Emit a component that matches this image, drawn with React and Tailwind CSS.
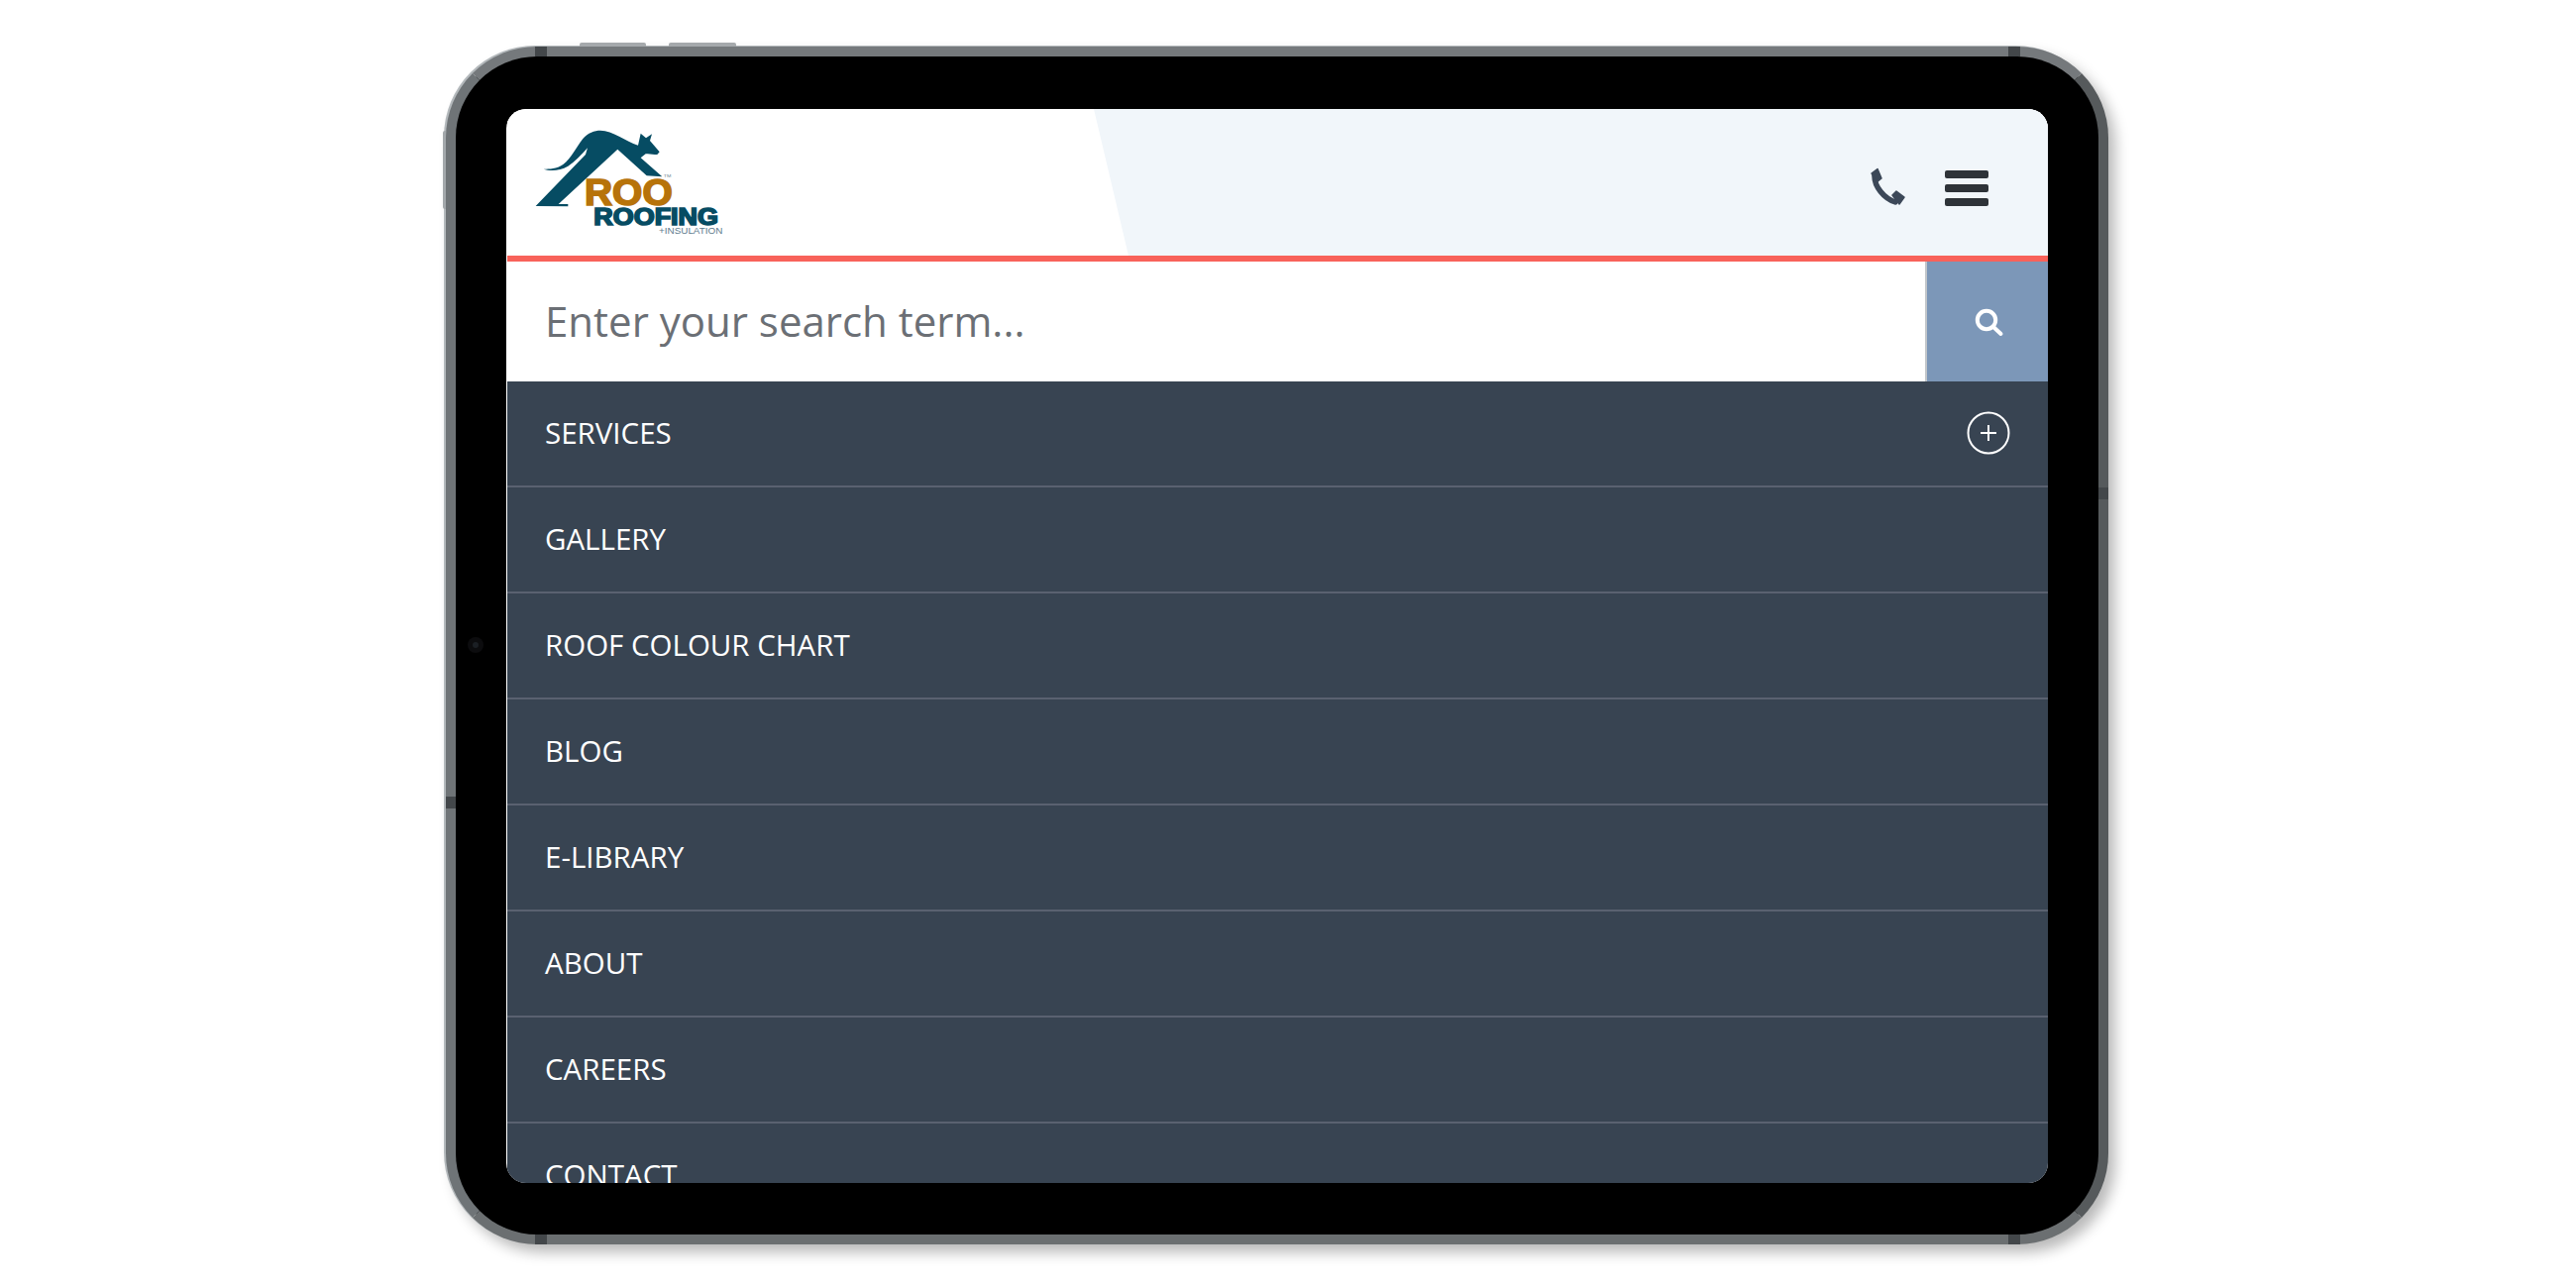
const items = ["SERVICES", "GALLERY", "ROOF COLOUR CHART", "BLOG", "E-LIBRARY", "ABOUT", "CAREERS", "CONTACT"];

function Logo() {
  return (
    <svg width="230" height="125" viewBox="0 0 690 375" className="block shrink-0">
      <path
        fill="#064c63"
        d="M62 264 L213 108 L219 88 C200 110 180 130 160 143 C135 158 105 158 86 152 C105 152 125 152 145 138 C170 120 185 85 205 60 C220 42 240 35 258 35 C295 35 335 68 372 80 L380 44 L396 58 L414 46 L408 66 L437 100 L430 108 C418 108 405 104 395 106 L380 118 L445 175 L398 172 L310 92 L131 258 L160 258 L160 265 Z"
      />
      <text x="210" y="262" fill="#b7730a" stroke="#b7730a" strokeWidth="5" fontFamily="'Liberation Sans', sans-serif" fontWeight="700" fontSize="110" textLength="266" lengthAdjust="spacingAndGlyphs">ROO</text>
      <text x="238" y="320" fill="#064c63" stroke="#064c63" strokeWidth="5" fontFamily="'Liberation Sans', sans-serif" fontWeight="700" fontSize="70" textLength="377" lengthAdjust="spacingAndGlyphs">ROOFING</text>
      <text x="435" y="348" fill="#5d7a8c" fontFamily="'Liberation Sans', sans-serif" fontSize="29" textLength="193" lengthAdjust="spacingAndGlyphs">+INSULATION</text>
      <text x="449" y="176" fill="#6f8794" fontFamily="'Liberation Sans', sans-serif" fontSize="13" textLength="23" lengthAdjust="spacingAndGlyphs">TM</text>
    </svg>
  );
}

function PhoneIcon() {
  return (
    <svg width="36" height="40" viewBox="0 0 36 40" fill="none" className="block">
      <path d="M5 9 C5 19 14 31 26 35" stroke="#3c4858" strokeWidth="5.5" strokeLinecap="round" />
      <path d="M2 6 L8 1.5 L12 11 L7 15 Z" fill="#3c4858" stroke="#3c4858" strokeWidth="1.5" strokeLinejoin="round" />
      <path d="M23 28 L27 24 L35 30 L30 37 Z" fill="#3c4858" stroke="#3c4858" strokeWidth="1.5" strokeLinejoin="round" />
    </svg>
  );
}

function SearchIcon() {
  return (
    <svg width="30" height="30" viewBox="0 0 30 30" fill="none" className="block">
      <circle cx="12" cy="12" r="9.2" stroke="#fff" strokeWidth="4" />
      <path d="M19 19 L26.5 26" stroke="#fff" strokeWidth="4" strokeLinecap="round" />
    </svg>
  );
}

function PlusCircle() {
  return (
    <svg width="44" height="44" viewBox="0 0 44 44" fill="none" className="block">
      <circle cx="22" cy="22" r="20.5" stroke="#fff" strokeWidth="2" />
      <path d="M14 22 H30 M22 14 V30" stroke="#fff" strokeWidth="2" />
    </svg>
  );
}

export default function App() {
  return (
    <div className="h-[1300px] w-full overflow-hidden bg-white pl-[450px] pt-[47px]">
      <div className="relative box-border h-[1209px] w-[1678px] rounded-[92px] border-[10px] border-t-[#75797c] border-r-[#565a5c] border-b-[#6b6f71] border-l-[#6f7477] bg-black px-[51px] pb-[53px] pt-[53px] shadow-[-2px_-1px_0_#b4b9bc,7px_8px_14px_rgba(0,0,0,0.28)]">
        {/* hardware buttons */}
        <div className="absolute left-[125px] top-[-14px] h-[4px] w-[67px] rounded-t-[2px] bg-[#a5a9ac]" />
        <div className="absolute left-[215px] top-[-14px] h-[4px] w-[68px] rounded-t-[2px] bg-[#a5a9ac]" />
        <div className="absolute left-[-13px] top-[75px] h-[79px] w-[3px] rounded-l-[2px] bg-[#a3a8ab]" />
        {/* antenna bands */}
        <div className="absolute left-[80px] top-[-10px] h-[10px] w-[12px] bg-[#43474a]" />
        <div className="absolute left-[1567px] top-[-10px] h-[10px] w-[12px] bg-[#43474a]" />
        <div className="absolute bottom-[-10px] left-[80px] h-[10px] w-[12px] bg-[#43474a]" />
        <div className="absolute bottom-[-10px] left-[1567px] h-[10px] w-[12px] bg-[#43474a]" />
        <div className="absolute right-[-10px] top-[435px] h-[12px] w-[10px] bg-[#43474a]" />
        <div className="absolute left-[-10px] top-[747px] h-[12px] w-[10px] bg-[#43474a]" />
        {/* camera */}
        <div className="absolute left-[12px] top-[586px] h-[16px] w-[16px] rounded-full bg-[#0c0c0e]">
          <div className="m-[5px] h-[6px] w-[6px] rounded-full bg-[#1b1f24]" />
        </div>

        <div className="h-[1084px] w-[1556px] overflow-hidden rounded-[20px] bg-white pl-[1px]" style={{ fontFamily: "'Open Sans', sans-serif" }}>
          <header className="relative flex h-[148px] items-center justify-between bg-white pl-[8px]">
            <div className="absolute inset-y-0 right-0 w-[963px] bg-[#f1f6fa] [clip-path:polygon(0_0,100%_0,100%_100%,35px_100%)]" />
            <div className="relative pb-[3px]">
              <Logo />
            </div>
            <div className="relative flex items-start gap-[40px] pr-[60px] pt-[10px]">
              <PhoneIcon />
              <div className="mt-[3px] flex w-[44px] flex-col gap-[6px]">
                <div className="h-[8px] rounded-[2px] bg-[#2e3338]" />
                <div className="h-[8px] rounded-[2px] bg-[#2e3338]" />
                <div className="h-[8px] rounded-[2px] bg-[#2e3338]" />
              </div>
            </div>
          </header>
          <div className="h-[6px] bg-[#f8625a]" />
          <div className="flex h-[121px]">
            <input
              type="text"
              placeholder="Enter your search term..."
              className="h-full min-w-0 flex-1 border-r-2 border-[#c2c6ca] bg-white pb-[3px] pl-[38px] text-[42px] outline-none placeholder:text-[#6b6f75]"
            />
            <div className="flex w-[122px] items-center justify-center bg-[#7c97b8] pl-[4px] pt-[3px]">
              <SearchIcon />
            </div>
          </div>
          <nav className="bg-[#384452]">
            {items.map((label, i) => (
              <div key={label} className="box-border flex h-[107px] items-center justify-between border-b-2 border-[#5a6170] pb-[1px] pl-[38px] pr-[38px] text-[29.5px] text-white">
                <span>{label}</span>
                {i === 0 && <PlusCircle />}
              </div>
            ))}
          </nav>
        </div>
      </div>
    </div>
  );
}
